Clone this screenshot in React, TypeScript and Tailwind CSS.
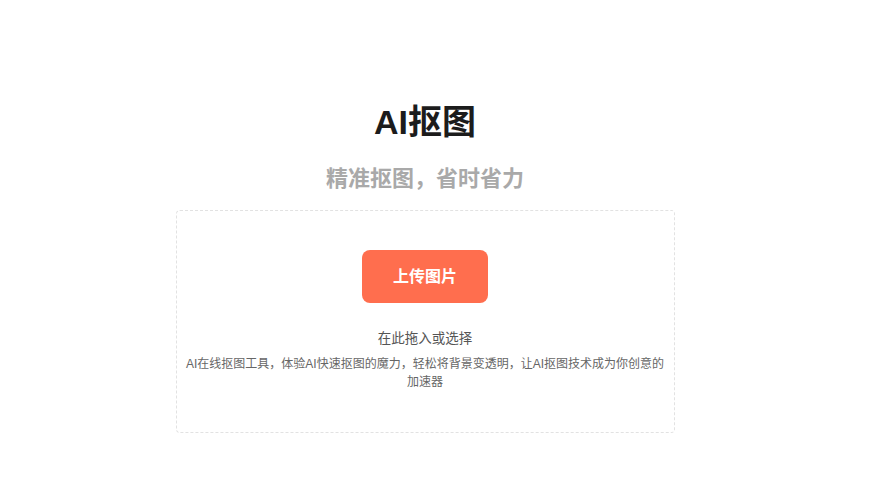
export default function App() {
  return (
    <div
      className="flex h-screen w-[850px] flex-col items-center bg-white"
      style={{ fontFamily: '"Liberation Sans", "Noto Sans CJK SC", sans-serif' }}
    >
      <h1 className="mt-[99px] text-[34px] font-bold leading-[46px] text-[#1c1c1c]">AI抠图</h1>
      <h2 className="mt-[19px] text-[22px] font-bold leading-[30px] text-[#a9a9a9]">精准抠图，省时省力</h2>
      <div className="mt-[16px] flex h-[223px] w-[499px] flex-col items-center rounded-[4px] border border-dashed border-[#e2e2e2] px-[8px] pt-[39px]">
        <button className="h-[53px] w-[126px] rounded-[8px] bg-[#ff6e4e] text-[16px] font-bold text-white">
          上传图片
        </button>
        <p className="mt-[26px] text-[13.5px] leading-[20px] text-[#555]">在此拖入或选择</p>
        <p className="mt-[6px] text-center text-[12px] leading-[18px] text-[#666]">
          AI在线抠图工具，体验AI快速抠图的魔力，轻松将背景变透明，让AI抠图技术成为你创意的加速器
        </p>
      </div>
    </div>
  );
}
